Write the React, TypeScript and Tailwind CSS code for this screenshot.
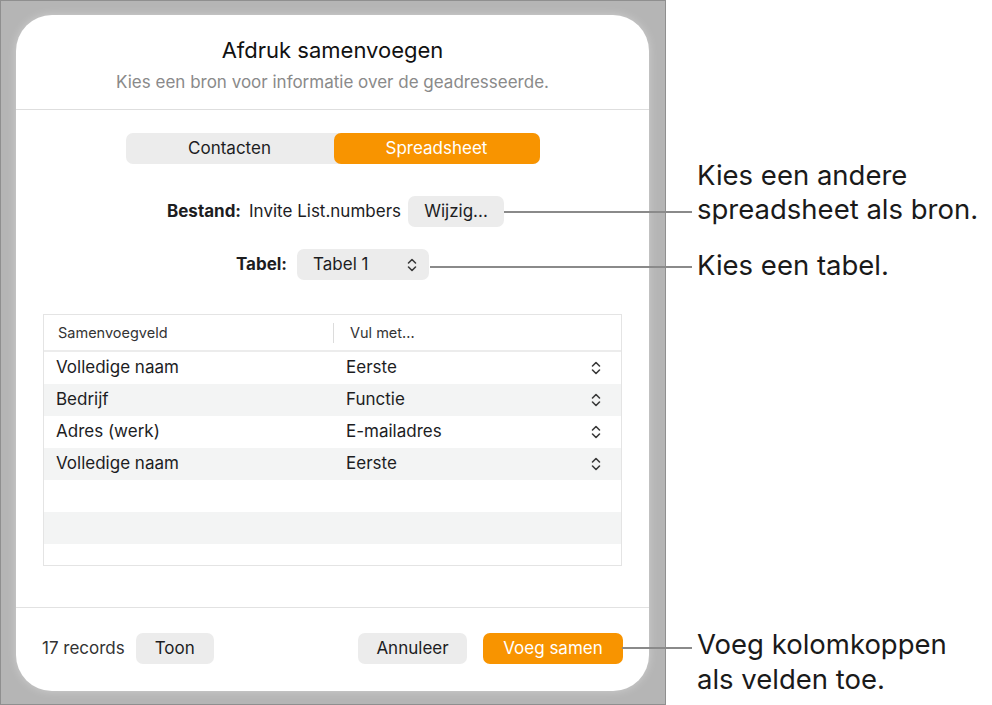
const rows = [
  { field: "Volledige naam", value: "Eerste" },
  { field: "Bedrijf", value: "Functie" },
  { field: "Adres (werk)", value: "E-mailadres" },
  { field: "Volledige naam", value: "Eerste" },
  null,
  null,
];

function UpDown() {
  return (
    <svg width="10" height="14" viewBox="0 0 10 14" fill="none" className="shrink-0">
      <path d="M1.5 5L5 1.5L8.5 5" stroke="#3a3a3a" strokeWidth="1.6" strokeLinecap="round" strokeLinejoin="round" />
      <path d="M1.5 9L5 12.5L8.5 9" stroke="#3a3a3a" strokeWidth="1.6" strokeLinecap="round" strokeLinejoin="round" />
    </svg>
  );
}

export default function App() {
  return (
    <div className="relative flex w-[992px] h-[705px] bg-white text-[#1d1d1f] font-['Inter','Liberation_Sans',sans-serif]">
      {/* gray backdrop with dialog */}
      <div className="w-[666px] h-[705px] shrink-0 border border-[#8f8f8f] bg-[#b5b5b5] pt-[14px] pl-[15px]">
        <div className="flex flex-col w-[633px] h-[676px] rounded-[36px] bg-white shadow-[0_0_10px_rgba(255,255,255,0.35)]">
          <div className="flex flex-col items-center pt-[22px]">
            <div className="text-[22px] leading-[26px] text-[#111]">Afdruk samenvoegen</div>
            <div className="mt-[8px] text-[17px] leading-[22px] text-[#8a8a8a]">
              Kies een bron voor informatie over de geadresseerde.
            </div>
          </div>
          <div className="mt-[16px] h-px bg-[#dedede]" />

          <div className="mt-[23px] flex justify-center">
            <div className="flex w-[414px] h-[31px] rounded-[7px] bg-[#ececec] text-[17px]">
              <div className="flex flex-1 items-center justify-center text-[#1d1d1f]">Contacten</div>
              <div className="flex w-[206px] items-center justify-center rounded-[7px] bg-[#f89400] text-white">
                Spreadsheet
              </div>
            </div>
          </div>

          <div className="mt-[32px] flex items-center justify-center pl-[6px] text-[17px]">
            <span className="font-bold">Bestand:</span>
            <span className="ml-[8px]">Invite List.numbers</span>
            <div className="ml-[7px] flex h-[31px] w-[96px] items-center justify-center rounded-[7px] bg-[#ececec]">
              Wijzig...
            </div>
          </div>

          <div className="mt-[22px] flex items-center justify-center text-[17px]">
            <span className="font-bold">Tabel:</span>
            <div className="ml-[10px] flex h-[31px] w-[132px] items-center justify-between rounded-[7px] bg-[#ececec] pl-[16px] pr-[12px]">
              <span>Tabel 1</span>
              <UpDown />
            </div>
          </div>

          <div className="mx-[27px] mt-[34px] h-[252px] border border-[#e4e4e4] flex flex-col">
            <div className="flex h-[37px] shrink-0 items-center border-b-2 border-[#ececec] text-[14.5px] text-[#333]">
              <div className="w-[289px] pl-[14px]">Samenvoegveld</div>
              <div className="h-[20px] w-px bg-[#dcdcdc]" />
              <div className="pl-[16px]">Vul met...</div>
            </div>
            {rows.map((r, i) => (
              <div
                key={i}
                className={`flex h-[32px] shrink-0 items-center text-[17px] ${i % 2 === 1 ? "bg-[#f3f4f4]" : "bg-white"}`}
              >
                {r && (
                  <>
                    <div className="w-[290px] pl-[12px]">{r.field}</div>
                    <div className="flex flex-1 items-center justify-between pl-[12px] pr-[20px]">
                      <span>{r.value}</span>
                      <UpDown />
                    </div>
                  </>
                )}
              </div>
            ))}
          </div>

          <div className="mt-[41px] h-px bg-[#e2e2e2]" />

          <div className="mt-[25px] flex items-center px-[26px] text-[17px]">
            <span className="text-[#333]">17 records</span>
            <div className="ml-[11px] flex h-[31px] w-[78px] items-center justify-center rounded-[7px] bg-[#ececec]">
              Toon
            </div>
            <div className="ml-auto flex h-[31px] w-[109px] items-center justify-center rounded-[7px] bg-[#ececec]">
              Annuleer
            </div>
            <div className="ml-[16px] flex h-[31px] w-[140px] items-center justify-center rounded-[7px] bg-[#f89400] text-white">
              Voeg samen
            </div>
          </div>
        </div>
      </div>

      {/* callouts */}
      <div className="flex flex-col pl-[31px] pt-[158px] text-[27.5px] leading-[34px] text-[#1a1a1a]">
        <div>
          Kies een andere
          <br />
          spreadsheet als bron.
        </div>
        <div className="mt-[22px]">Kies een tabel.</div>
        <div className="mt-[345px] leading-[35px]">
          Voeg kolomkoppen
          <br />
          als velden toe.
        </div>
      </div>

      {/* connector lines */}
      <div className="absolute left-[504px] top-[211px] h-[2px] w-[188px] bg-[#8a8a8a]" />
      <div className="absolute left-[430px] top-[266px] h-[2px] w-[262px] bg-[#8a8a8a]" />
      <div className="absolute left-[622px] top-[647px] h-[2px] w-[70px] bg-[#8a8a8a]" />
    </div>
  );
}
